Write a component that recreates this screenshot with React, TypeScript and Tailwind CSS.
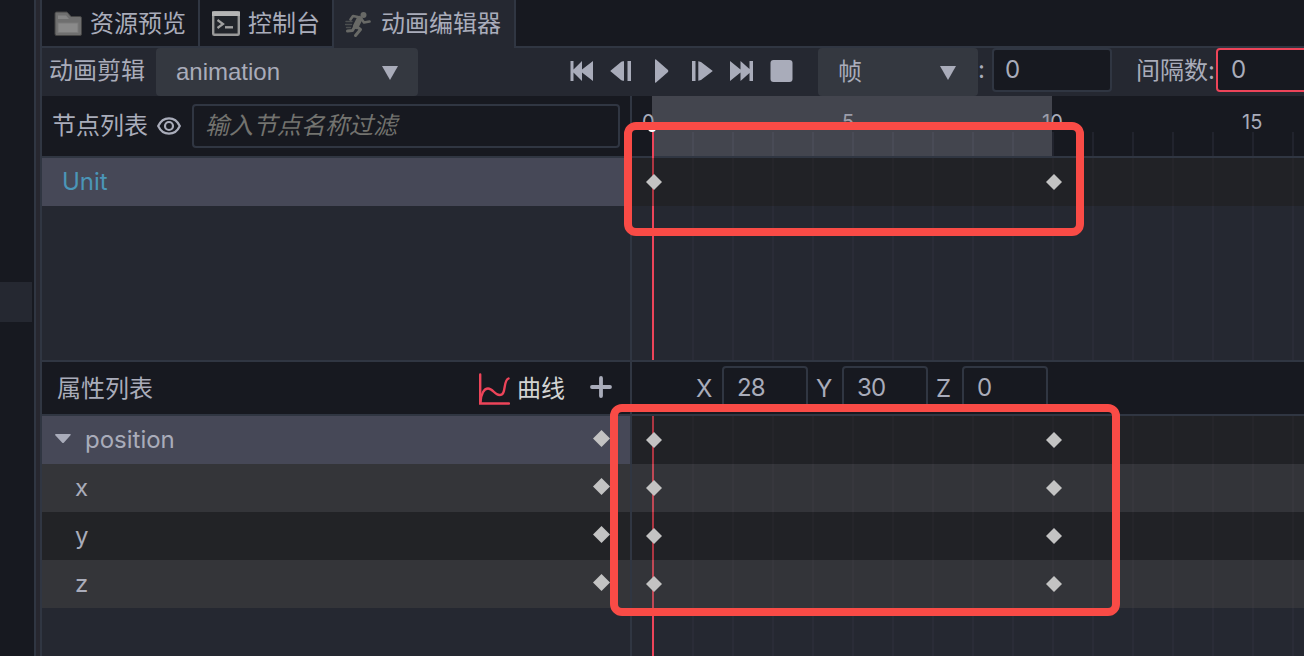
import type { ReactNode } from "react";
import clsx from "clsx";

const CJK = "font-['Inter','Noto_Sans_CJK_SC',sans-serif]";
const ARIAL = "font-['Liberation_Sans','Noto_Sans_CJK_SC',sans-serif]";

const PROPERTIES = ["position", "x", "y", "z"];
const KEYFRAMES = [0, 10];
const FRAME_WIDTH = 40;

const LABELS = [
  { text: "0", left: 10 },
  { text: "5", left: 210 },
  { text: "10", left: 410 },
  { text: "15", left: 610 },
];

function FolderIcon() {
  return (
    <svg width="28" height="26" viewBox="0 0 28 26">
      <path d="M1 2.500Q1 1 2.500 1H13l4 4.500H26q1.500 0 1.500 1.500V23q0 1.500-1.500 1.500H2.500Q1 24.500 1 23Z" fill="#6f6f6f" stroke="#454545" />
      <path d="M4 4.500h8l3 3.500H4Z" fill="#858585" />
      <rect x="4" y="12" width="20" height="9.500" fill="#8a8a8a" stroke="#7b7b7b" />
    </svg>
  );
}

function ConsoleIcon() {
  return (
    <svg width="28" height="26" viewBox="0 0 28 26">
      <rect x="1.200" y="1.200" width="25.600" height="22.600" rx="1" fill="#22252b" stroke="#999" strokeWidth="2.400" />
      <path d="M0 .5h28v4.500H0Z" fill="#b5b5b5" />
      <path d="M5.500 9l5.500 4-5.500 4" fill="none" stroke="#a0a0a0" strokeWidth="2.200" />
      <path d="M13 16.300h8" stroke="#a0a0a0" strokeWidth="2.400" />
    </svg>
  );
}

function RunIcon() {
  return (
    <svg width="26" height="27" viewBox="0 0 26 27" fill="none" stroke="#686966" strokeLinecap="round" strokeLinejoin="round">
      <circle cx="18.500" cy="4" r="3" fill="#686966" stroke="none" />
      <path d="M14.500 8l-3.500 7" strokeWidth="6" />
      <path d="M13 6L8 5 5.500 8.500M16.500 8l2.500 3.500 5.500-1" strokeWidth="2.600" />
      <path d="M11.500 15.500l4 3-5 6M9.500 16l-2 3.500-5 .5" strokeWidth="3" />
      <path d="M1 10.500h6M0.500 13.500h6M1.500 16.500h4" strokeWidth="1.400" opacity=".6" />
    </svg>
  );
}

function EyeIcon() {
  return (
    <svg width="24" height="18" viewBox="0 0 24 18" fill="none" stroke="#a9acba" strokeWidth="2.200">
      <path d="M1.200 9C3.500 4 7.300 1.300 12 1.300S20.500 4 22.800 9C20.500 14 16.700 16.700 12 16.700S3.500 14 1.200 9Z" />
      <circle cx="12" cy="9" r="4" />
    </svg>
  );
}

function CurveIcon() {
  return (
    <svg width="32" height="32" viewBox="0 0 32 32" fill="none" stroke="#ed4459" strokeWidth="2.400" strokeLinecap="round">
      <path d="M2.200 1.500V30.500H31" />
      <path d="M2.500 29C3 21 6 15.500 10 15.500C15 15.500 16.500 22 21.500 22C29 22 24.500 8 30.500 5.500" />
    </svg>
  );
}

function Caret({ className }: { className?: string }) {
  return (
    <svg width="16" height="14" viewBox="0 0 16 14" className={className}>
      <path d="M0 0h16L8 14Z" fill="#a9acba" />
    </svg>
  );
}

function Diamond({ size, className }: { size: number; className?: string }) {
  return (
    <svg width={size} height={size} viewBox="0 0 16 16" className={className}>
      <path d="M8 0l8 8-8 8-8-8Z" fill="#c3c3c3" />
    </svg>
  );
}

const TRANSPORT: Record<string, ReactNode> = {
  first: <path d="M1.500 2H4.500V10.500L13 2V10.500L24 2V22L13 13.500V22L4.500 13.500V22H1.500Z" />,
  prev: <path d="M15 2.300V21.700Q13 22 12 21L1.200 12 12 3Q13 2 15 2.300ZM18.500 2H22V22H18.500Z" />,
  play: <path d="M6 .8Q6 0 7 .5L19 11Q19.600 12 19 13L7 23.500Q6 24 6 23.200Z" />,
  next: <path d="M3 2H6.500V22H3ZM9.300 2.300L12 3 23.800 12 12 21 9.300 21.700Z" />,
  last: <path d="M1 2L11.500 10.500V2L20.500 10V2H24V22H20.500V14L11.500 22V13.500L1 22Z" />,
  stop: <rect x="1.500" y="1" width="22" height="22" rx="3" />,
};

function Tab({ icon, label, className }: { icon: ReactNode; label: string; className: string }) {
  return (
    <div className={clsx("flex h-12 shrink-0 items-center border-[#303642] pl-3", className)}>
      <span className="flex w-9 shrink-0">{icon}</span>
      <span className="whitespace-nowrap">{label}</span>
    </div>
  );
}

function Axis({ name, value }: { name: string; value: string }) {
  return (
    <div className="flex w-[120px] items-center">
      <span className="w-[34px] pt-px pl-2">{name}</span>
      <span className="flex h-11 w-[86px] items-center rounded border-2 border-[#303642] pl-[13px] tracking-[-0.8px]">{value}</span>
    </div>
  );
}

function KeyTrack({ odd }: { odd?: boolean }) {
  return (
    <div className={clsx("relative h-12 shrink-0", odd ? "bg-[rgba(87,83,76,0.3)]" : "bg-[rgba(27,23,12,0.3)]")}>
      {KEYFRAMES.map((frame) => (
        <span key={frame} className="absolute top-4" style={{ left: 14 + frame * FRAME_WIDTH }}>
          <Diamond size={16} />
        </span>
      ))}
    </div>
  );
}

function Canvas({ children }: { children: ReactNode }) {
  return (
    <div className="relative flex min-h-0 flex-1 flex-col bg-[linear-gradient(90deg,#2a2c37_2px,transparent_2px)] bg-[length:40px_100%] bg-[position:20px_0]">
      <div className="absolute inset-y-0 left-5 w-0.5 bg-[#ed4459]" />
      {children}
    </div>
  );
}

export default function App() {
  return (
    <main className={clsx("relative flex h-[656px] w-[1304px] overflow-hidden bg-[#171920] text-2xl leading-none text-[#a9acba]", CJK)}>
      <aside className="w-[34px] shrink-0 pt-[282px]">
        <div className="h-10 w-8 bg-[#252831]" />
      </aside>
      <div className="w-2 shrink-0 border-x-2 border-[#303642] bg-[#27272f]" />

      <section className="flex min-w-0 flex-1 flex-col">
        <nav className="flex h-12 shrink-0">
          <Tab icon={<FolderIcon />} label="资源预览" className="w-[158px] border-r-2 border-b-2 pt-0.5" />
          <Tab icon={<ConsoleIcon />} label="控制台" className="w-[134px] border-r-2 border-b-2 pt-0.5" />
          <Tab icon={<RunIcon />} label="动画编辑器" className="w-[182px] border-r-2 bg-[#252831] pl-[11px]" />
          <div className="flex-1 border-b-2 border-[#303642]" />
        </nav>

        <div className="flex h-12 shrink-0 bg-[#252831]">
          <span className="w-[114px] shrink-0 pt-[11px] pl-[7px]">动画剪辑</span>
          <div className={clsx("flex w-[262px] shrink-0 items-center justify-between rounded bg-[#343840] pr-5 pl-5", ARIAL)}>
            animation
            <Caret className="mt-0.5" />
          </div>
          <div className="ml-[151px] flex shrink-0 gap-4 pt-[11px]">
            {Object.entries(TRANSPORT).map(([name, shape]) => (
              <svg key={name} width="24" height="24" viewBox="0 0 24 24" fill="#a9acba">
                {shape}
              </svg>
            ))}
          </div>
          <div className="ml-[25px] flex w-[160px] shrink-0 items-center justify-between rounded bg-[#343840] pr-[22px] pl-5">
            帧
            <Caret className="mt-0.5" />
          </div>
          <span className="w-3.5 shrink-0 pt-2.5">:</span>
          <div className="h-11 w-[120px] shrink-0 rounded border-2 border-[#303642] bg-[#171920] pt-2 pl-[11px]">0</div>
          <span className="w-[104px] shrink-0 pt-[11px] pl-6 whitespace-nowrap">间隔数:</span>
          <div className="h-11 w-[120px] shrink-0 rounded border-2 border-[#ed4459] bg-[#171920] pt-2 pl-[13px]">0</div>
        </div>

        <div className="flex h-[266px] shrink-0 border-b-2 border-[#303642]">
          <div className="flex w-[590px] shrink-0 flex-col border-r-2 border-[#303642] bg-[#252831]">
            <div className="flex h-[62px] items-center border-b-2 border-[#303642] bg-[#171920] pr-2.5 pl-2.5">
              <span className="w-[105px]">节点列表</span>
              <EyeIcon />
              <div className="ml-[11px] flex h-11 flex-1 items-center rounded border-2 border-[#303642] pl-[11px] text-[#73736f] italic">
                输入节点名称过滤
              </div>
            </div>
            <div className="flex h-12 items-center bg-[#464857] pl-5 text-[#4b96b8]">Unit</div>
          </div>

          <div className="flex min-w-0 flex-1 flex-col bg-[#252831]">
            <div className="relative h-[62px] shrink-0 border-b-2 border-[#303642] bg-[#171920]">
              {LABELS.map((label) => (
                <span key={label.text} className="absolute top-4 text-xl leading-none" style={{ left: label.left }}>
                  {label.text}
                </span>
              ))}
              <div className="absolute inset-x-0 bottom-0 h-6 bg-[linear-gradient(90deg,#21232d_2px,transparent_2px)] bg-[length:40px_100%] bg-[position:20px_0]" />
              <div className="absolute top-0 left-5 h-[60px] w-[400px] bg-[rgba(135,135,148,0.4)]" />
              <div className="absolute top-[28px] left-4 size-2 rounded-full bg-white" />
              <div className="absolute top-9 left-5 h-[26px] w-0.5 bg-[#ed4459]" />
            </div>
            <Canvas>
              <KeyTrack />
            </Canvas>
          </div>
        </div>

        <div className="flex min-h-0 flex-1">
          <div className="flex w-[590px] shrink-0 flex-col border-r-2 border-[#303642] bg-[#252831]">
            <div className="flex h-[54px] shrink-0 items-center border-b-2 border-[#303642] bg-[#171920] pt-0.5 pl-[15px]">
              <span className="w-[421px]">属性列表</span>
              <CurveIcon />
              <span className="ml-[7px] text-[#d3d4d3]">曲线</span>
              <svg width="22" height="22" viewBox="0 0 22 22" className="ml-[25px] -mt-1">
                <path d="M11 2v18M2 11h18" stroke="#a9acba" strokeWidth="3.800" strokeLinecap="round" />
              </svg>
            </div>
            {PROPERTIES.map((name, i) => (
              <div
                key={name}
                className={clsx(
                  "flex h-12 shrink-0 items-center pr-5",
                  i === 0 ? "bg-[#464857] pl-[13px]" : "pl-[33px]",
                  i % 2 === 1 && "bg-[#343539]",
                  i === 2 && "bg-[#222326]",
                )}
              >
                {i === 0 && (
                  <svg width="16" height="10" viewBox="0 0 16 10" className="mr-3.5 -mt-0.5">
                    <path d="M0 1Q0 0 1 0H15Q16.500 0 15.500 1.200L9 8.500Q8 9.500 7 8.500L.5 1.500Z" fill="#a9acba" />
                  </svg>
                )}
                <span className="flex-1">{name}</span>
                <Diamond size={17} className="-mt-1" />
              </div>
            ))}
          </div>

          <div className="flex min-w-0 flex-1 flex-col bg-[#252831]">
            <div className="flex h-[54px] shrink-0 items-start border-b-2 border-[#303642] bg-[#171920] pt-1 pl-14">
              <Axis name="X" value="28" />
              <Axis name="Y" value="30" />
              <Axis name="Z" value="0" />
            </div>
            <Canvas>
              {PROPERTIES.map((name, i) => (
                <KeyTrack key={name} odd={i % 2 === 1} />
              ))}
            </Canvas>
          </div>
        </div>
      </section>

      {/* callouts around the keyframes */}
      <div className="absolute top-[122px] left-[624px] h-[114px] w-[460px] rounded-xl border-8 border-[#f94b46]" />
      <div className="absolute top-[404px] left-[610px] h-[212px] w-[510px] rounded-xl border-8 border-[#f94b46]" />
    </main>
  );
}
